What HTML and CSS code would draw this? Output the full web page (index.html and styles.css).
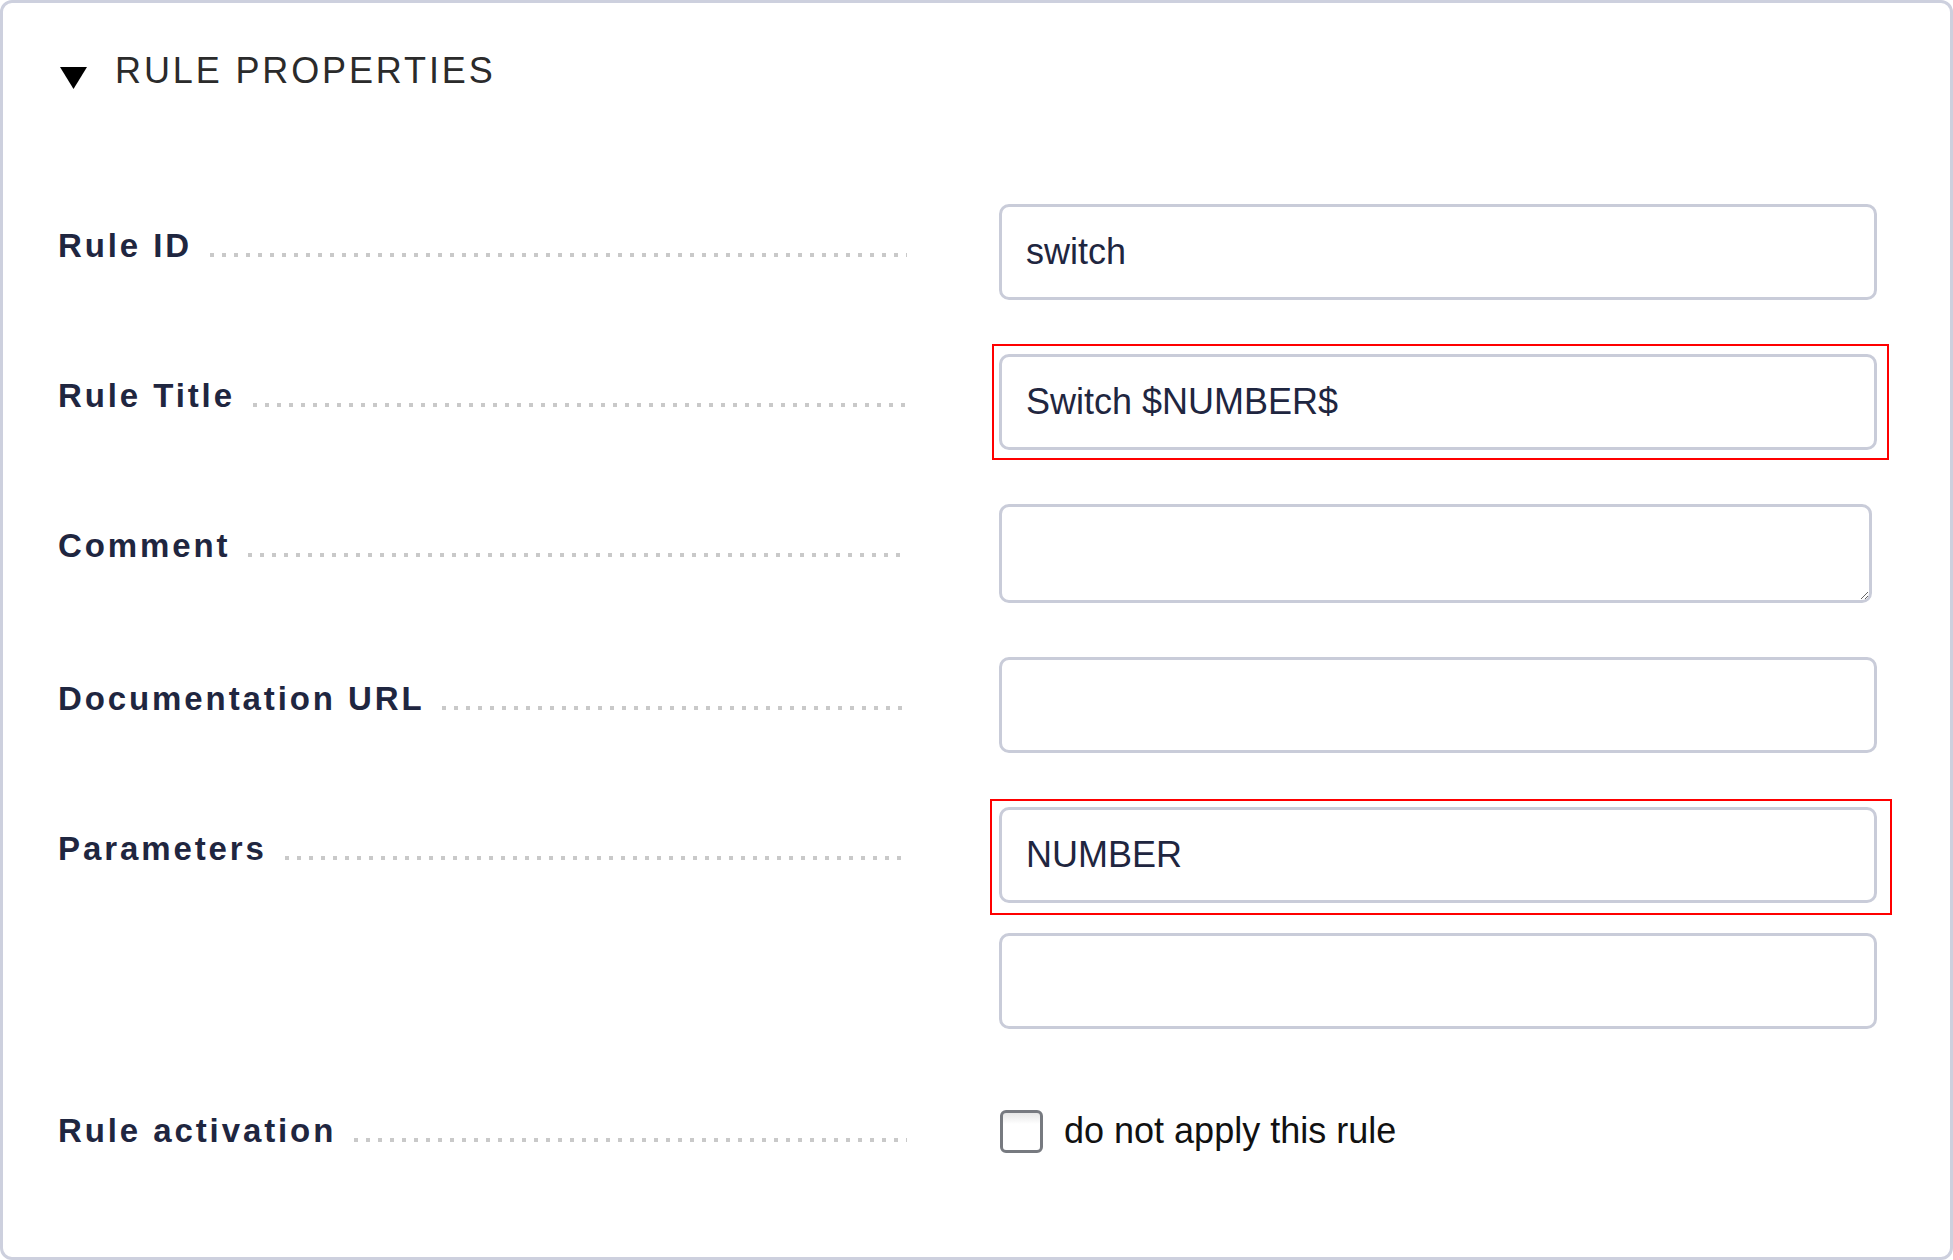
FILE: index.html
```html
<!DOCTYPE html>
<html lang="en">
<head>
<meta charset="utf-8">
<title>Rule properties</title>
<link rel="stylesheet" href="styles.css">
</head>
<body>
<div class="panel">
  <div class="panel-header">
    <svg class="caret" width="27" height="22" viewBox="0 0 27 22"><polygon points="0,0 27,0 13.5,22" fill="#000"/></svg>
    <span class="panel-title">RULE PROPERTIES</span>
  </div>
  <div class="form">
    <div class="label-cell"><div class="label-line"><span class="label-text">Rule ID</span><span class="leader"></span></div></div>
    <div class="field-cell"><input class="text-input" type="text" value="switch"></div>

    <div class="label-cell"><div class="label-line"><span class="label-text">Rule Title</span><span class="leader"></span></div></div>
    <div class="field-cell"><div class="annot annot-a"><input class="text-input" type="text" value="Switch $NUMBER$"></div></div>

    <div class="label-cell"><div class="label-line"><span class="label-text">Comment</span><span class="leader"></span></div></div>
    <div class="field-cell"><textarea class="text-area"></textarea></div>

    <div class="label-cell"><div class="label-line"><span class="label-text">Documentation URL</span><span class="leader"></span></div></div>
    <div class="field-cell"><input class="text-input" type="text" value=""></div>

    <div class="label-cell"><div class="label-line"><span class="label-text">Parameters</span><span class="leader"></span></div></div>
    <div class="field-cell field-stack">
      <div class="annot annot-b"><input class="text-input" type="text" value="NUMBER"></div>
      <input class="text-input" type="text" value="">
    </div>

    <div class="label-cell label-cell-centered"><div class="label-line"><span class="label-text">Rule activation</span><span class="leader"></span></div></div>
    <div class="field-cell field-check">
      <label class="check"><input class="check-box" type="checkbox"><span class="check-text">do not apply this rule</span></label>
    </div>
  </div>
</div>
</body>
</html>
```
FILE: styles.css
```css
html, body {
  margin: 0;
  padding: 0;
  background: #ffffff;
}

body {
  font-family: "Liberation Sans", Arial, sans-serif;
}

.panel {
  box-sizing: border-box;
  width: 1953px;
  height: 1260px;
  border: 3px solid #cdd0de;
  border-radius: 12px;
  padding: 47px 73px 0 55px;
  background: #ffffff;
}

.panel-header {
  display: flex;
  align-items: flex-start;
  height: 42px;
  margin: 0 0 112px 2px;
}

.caret {
  display: block;
  margin-top: 17px;
  flex: none;
}

.panel-title {
  margin-left: 28px;
  font-size: 36px;
  line-height: 42px;
  letter-spacing: 0.08em;
  color: #2b2b2b;
  white-space: nowrap;
}

.form {
  display: grid;
  grid-template-columns: 849px 878px;
  column-gap: 92px;
  row-gap: 54px;
  align-items: start;
}

.label-cell {
  box-sizing: border-box;
  display: flex;
  align-items: center;
  height: 96px;
  padding: 0 0 12px 0;
}

.label-cell-centered {
  padding-bottom: 0;
}

.label-line {
  display: flex;
  align-items: baseline;
  flex: 1;
  min-width: 0;
}

.label-text {
  font-size: 33px;
  font-weight: bold;
  letter-spacing: 2.9px;
  color: #1f2640;
  white-space: nowrap;
}

.leader {
  flex: 1;
  height: 4px;
  margin-left: 18px;
  background-image: linear-gradient(to right, #c9c9c9 0, #c9c9c9 4px, transparent 4px, transparent 12px);
  background-size: 12px 4px;
  background-repeat: repeat-x;
}

.field-cell {
  display: flex;
  flex-direction: column;
}

.field-stack {
  gap: 30px;
}

.field-check {
  height: 96px;
  justify-content: center;
}

.text-input,
.text-area {
  box-sizing: border-box;
  display: block;
  width: 878px;
  height: 96px;
  margin: 0;
  padding: 0 24px;
  border: 3px solid #c9ccd9;
  border-radius: 10px;
  background: #ffffff;
  font-family: "Liberation Sans", Arial, sans-serif;
  font-size: 36px;
  color: #1f2640;
  outline: none;
}

.text-area {
  width: 873px;
  height: 99px;
  padding: 20px 24px;
  resize: both;
}

.annot {
  position: relative;
}

.annot::after {
  content: "";
  position: absolute;
  border: 2px solid #ff0000;
  pointer-events: none;
}

.annot-a::after {
  left: -7px;
  right: -12px;
  top: -10px;
  bottom: -10px;
}

.annot-b::after {
  left: -9px;
  right: -15px;
  top: -8px;
  bottom: -12px;
}

.check {
  display: flex;
  align-items: center;
}

.check-box {
  appearance: none;
  -webkit-appearance: none;
  box-sizing: border-box;
  width: 43px;
  height: 43px;
  margin: 0 0 0 1px;
  border: 3px solid #777a80;
  border-radius: 6px;
  background: linear-gradient(#e6e6e6, #ffffff 30%);
  flex: none;
}

.check-text {
  margin-left: 21px;
  font-size: 36px;
  color: #111111;
  white-space: nowrap;
}
```
